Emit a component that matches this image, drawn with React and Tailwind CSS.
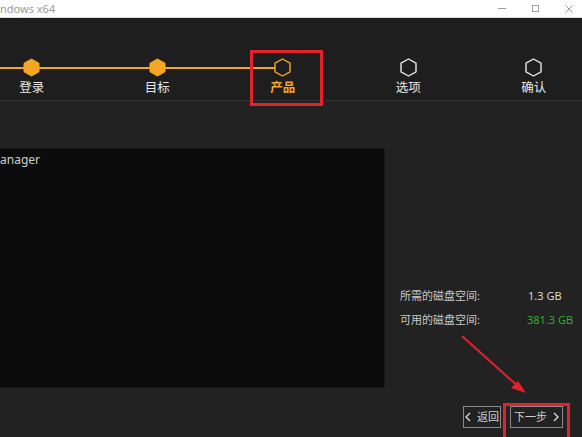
// Installer wizard: product step with disk space summary.
const steps = [
  { label: '登录', state: 'done' },
  { label: '目标', state: 'done' },
  { label: '产品', state: 'current' },
  { label: '选项', state: 'todo' },
  { label: '确认', state: 'todo' },
]

const ORANGE = '#f5a623'

function Hex({ state }) {
  const pts = '8.5,1 16,5.2 16,13.8 8.5,18 1,13.8 1,5.2'
  if (state === 'done') {
    return (
      <svg width="17" height="19" viewBox="0 0 17 19">
        <polygon points={pts} fill={ORANGE} stroke={ORANGE} strokeWidth="1" strokeLinejoin="round" />
      </svg>
    )
  }
  return (
    <svg width="17" height="19" viewBox="0 0 17 19">
      <polygon
        points={pts}
        fill="#1e1e1e"
        stroke={state === 'current' ? ORANGE : '#e6e6e6'}
        strokeWidth="1.4"
        strokeLinejoin="round"
      />
    </svg>
  )
}

function TitleBar() {
  return (
    <div className="flex h-[18px] items-center justify-between border-b border-[#d9d9d9] bg-white">
      <span className="text-[11px] leading-none text-[#9a9a9a]">ndows x64</span>
      <div className="flex items-center">
        <span className="mr-[26px] block h-px w-[8px] bg-[#a0a0a0]" />
        <span className="mr-[26px] block h-[7px] w-[7px] border border-[#a0a0a0]" />
        <svg width="8" height="8" viewBox="0 0 8 8" className="mr-[9px]">
          <path d="M0.5 0.5 L7.5 7.5 M7.5 0.5 L0.5 7.5" stroke="#a0a0a0" strokeWidth="1" />
        </svg>
      </div>
    </div>
  )
}

function Stepper() {
  return (
    <div className="h-[83px] overflow-hidden border-b border-[#2f2f2f] bg-[#1e1e1e]">
      <div className="-ml-[31px] flex pt-[40px]">
        {steps.map((s, i) => {
          const leftOn = i <= 2
          const rightOn = i < 2
          return (
            <div key={s.label} className="relative flex w-[125.5px] shrink-0 flex-col items-center">
              <div className="absolute left-0 top-[9px] flex w-full">
                <span className={['h-[2px] w-1/2', leftOn ? 'bg-[#f5a623]' : ''].join(' ')} />
                <span className={['h-[2px] w-1/2', rightOn ? 'bg-[#f5a623]' : ''].join(' ')} />
              </div>
              <div className="relative">
                <Hex state={s.state} />
              </div>
              <span
                className={[
                  'mt-[3px] text-[12.5px] leading-[16px]',
                  s.state === 'current' ? 'font-bold text-[#f5a623]' : 'text-[#e8e8e8]',
                ].join(' ')}
              >
                {s.label}
              </span>
            </div>
          )
        })}
      </div>
    </div>
  )
}

export default function App() {
  return (
    <div
      className="relative h-[437px] w-[582px] overflow-hidden bg-[#222222]"
      style={{ fontFamily: '"Noto Sans", "Noto Sans CJK SC", sans-serif' }}
    >
      <TitleBar />
      <Stepper />

      <div className="flex pt-[47px]">
        <div className="h-[240px] w-[385px] border border-l-0 border-[#1a1a1a] bg-[#0b0b0b] pt-[5px]">
          <span className="block text-[12px] leading-[12px] text-[#cfcfcf]">anager</span>
        </div>
        <div className="flex flex-col gap-[8px] pl-[15px] pt-[140px] text-[11px] leading-[16px]">
          <div className="flex">
            <span className="w-[128px] text-[#c8c8c8]">所需的磁盘空间:</span>
            <span className="text-[#d8d8d8]">1.3 GB</span>
          </div>
          <div className="flex">
            <span className="w-[127px] text-[#c8c8c8]">可用的磁盘空间:</span>
            <span className="text-[#2fae2f]">381.3 GB</span>
          </div>
        </div>
      </div>

      <div className="flex justify-end gap-[9px] pr-[19px] pt-[18px]">
        <button className="flex h-[22px] w-[38px] items-center justify-center gap-[6px] border border-[#8a8a8a] text-[11px] text-[#d0d0d0]">
          <svg width="6" height="10" viewBox="0 0 6 10">
            <path d="M5 1 L1 5 L5 9" stroke="#d8d8d8" strokeWidth="1.4" fill="none" />
          </svg>
          返回
        </button>
        <button className="flex h-[22px] w-[53px] items-center justify-center gap-[6px] border border-[#8a8a8a] text-[11px] text-[#d0d0d0]">
          下一步
          <svg width="6" height="10" viewBox="0 0 6 10">
            <path d="M1 1 L5 5 L1 9" stroke="#d8d8d8" strokeWidth="1.4" fill="none" />
          </svg>
        </button>
      </div>

      {/* annotation overlays */}
      <div className="absolute left-[250px] top-[50px] h-[56px] w-[73px] border-[3px] border-[#e3222b]" />
      <div className="absolute left-[503px] top-[403px] h-[40px] w-[67px] border-[3px] border-[#e3222b]" />
      <svg className="absolute left-0 top-0" width="582" height="437">
        <line x1="462" y1="336" x2="520" y2="388" stroke="#e3222b" strokeWidth="2" />
        <polygon points="526,393 511,388 518,381" fill="#e3222b" />
      </svg>
    </div>
  )
}
